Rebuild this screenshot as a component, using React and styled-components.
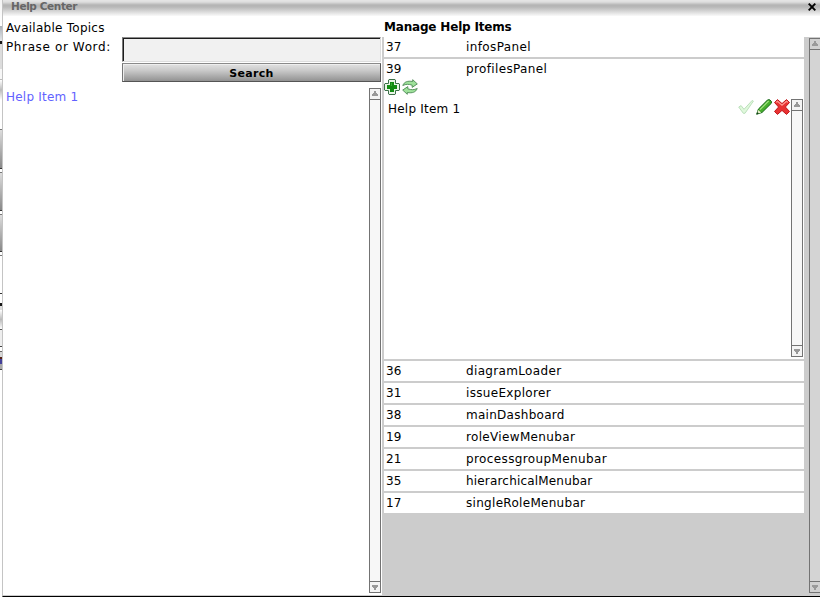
import React from "react";
import styled, { createGlobalStyle } from "styled-components";

const Global = createGlobalStyle`
  * { box-sizing: border-box; }
  body { margin: 0; overflow: hidden; background: #fff; }
  body, button, input { font-family: "DejaVu Sans", Verdana, sans-serif; font-size: 12px; color: #000; }
`;

const Screen = styled.div`
  display: flex;
  width: 820px;
  height: 597px;
  overflow: hidden;
  background: #fff;
`;

const Backdrop = styled.div`
  display: flex;
  flex-direction: column;
  flex: 0 0 2px;
  height: 597px;
`;

const Slice = styled.div`
  flex: 0 0 ${(p) => p.$h}px;
  background: ${(p) => p.$fill};
`;

const Window = styled.main`
  display: flex;
  flex-direction: column;
  width: 818px;
  height: 597px;
  border-left: 1px solid #c4c4c4;
  border-bottom: 1px solid #000;
`;

const TitleBar = styled.header`
  display: flex;
  justify-content: space-between;
  flex: 0 0 16px;
  padding: 0 4px 0 8px;
  background: linear-gradient(#e6e6e6 0, #dedede 2px, #b4b4b4 5px, #b8b8b8 7px, #d4d4d4 11px, #f2f2f2 15px, #fafafa 16px);
`;

const Title = styled.h1`
  margin: 0;
  font-size: 10.5px;
  font-weight: bold;
  line-height: 13px;
  letter-spacing: ${(p) => p.$track}px;
  color: #666;
`;

const CloseIcon = styled.svg`
  width: 8px;
  height: 8px;
  margin-top: 3px;
`;

const Body = styled.div`
  display: flex;
  flex: 0 0 579px;
`;

const BottomEdge = styled.div`
  flex: 0 0 1px;
  background: #ccc;
`;

const TopicsPanel = styled.section`
  display: flex;
  flex-direction: column;
  flex: 0 0 379px;
  height: 579px;
  padding-right: 1px;
`;

const Text = styled.span`
  display: block;
  font-size: ${(p) => p.$size || 12}px;
  font-weight: ${(p) => (p.$bold ? "bold" : "normal")};
  line-height: 18px;
  letter-spacing: ${(p) => p.$track || 0}px;
  white-space: nowrap;
  color: ${(p) => p.$color || "#000"};
`;

const TopicsTitle = styled.div`
  flex: 0 0 21px;
  padding: 3px 0 0 3px;
`;

const SearchForm = styled.form`
  display: grid;
  grid-template-columns: 119px 259px;
  grid-template-rows: 26px 19px;
  flex: 0 0 45px;
`;

const LabelCell = styled.label`
  grid-row: 1 / 3;
  padding: 1px 0 0 3px;
`;

const SearchInput = styled.input`
  width: 259px;
  height: 25px;
  padding: 0 4px;
  border: 1px solid;
  border-color: #8c8c8c #ddd #ddd #777;
  border-radius: 0;
  outline: none;
  background: #f1f1f1;
  box-shadow: inset 1px 1px #1c1c1c;
`;

const SearchButton = styled.button`
  height: 19px;
  padding: 2px 0 0;
  border: 1px solid;
  border-color: #8a8a8a #555 #555 #777;
  background: linear-gradient(#e2e2e2, #c8c8c8 40%, #929292);
  box-shadow: inset 1px 1px #eee;
  font-size: 11px;
  font-weight: bold;
  line-height: 15px;
  letter-spacing: 0.3px;
`;

const TopicsList = styled.div`
  display: flex;
  justify-content: space-between;
  flex: 0 0 505px;
  margin-top: 6px;
  padding-left: 3px;
`;

const Bar = styled.div`
  display: flex;
  flex-direction: column;
  justify-content: space-between;
  flex: 0 0 ${(p) => p.$w || 12}px;
  height: ${(p) => p.$h}px;
  border: 1px solid #737373;
  ${(p) => p.$w && "border-right: 0;"}
  background: ${(p) => (p.$dark ? "#d4d4d4" : "#f7f7f7")};
`;

const ArrowBox = styled.div`
  display: flex;
  align-items: center;
  justify-content: center;
  flex: 0 0 11px;
  border: 0 solid #737373;
  border-width: ${(p) => (p.$down ? "1px 0 0" : "0 0 1px")};
  background: ${(p) => (p.$dark ? "#d0d0d0" : "#f4f4f4")};
`;

const ManagePanel = styled.section`
  display: flex;
  flex-direction: column;
  flex: 1;
`;

const ManageTitle = styled.div`
  flex: 0 0 21px;
  padding: 2px 0 0 2px;
`;

const ManageBody = styled.div`
  display: flex;
  flex: 0 0 558px;
  justify-content: space-between;
  padding-left: 2px;
  background: #ccc;
`;

const Items = styled.div`
  display: flex;
  flex-direction: column;
  gap: 2px;
  width: 420px;
`;

const Row = styled.div`
  display: flex;
  flex: 0 0 20px;
  height: 20px;
  padding: 1px 0 0 2px;
  background: #fff;
`;

const IdCell = styled.div`
  width: 80px;
`;

const Expanded = styled.div`
  flex: 0 0 300px;
  background: #fff;
`;

const Toolbar = styled.div`
  display: flex;
  gap: 2px;
  height: 20px;
`;

const Icon = styled.svg`
  width: 16px;
  height: 16px;
`;

const HelpList = styled.div`
  display: flex;
  justify-content: space-between;
  height: 258px;
  padding: 0 1px 0 4px;
`;

const HelpRow = styled.div`
  display: flex;
  justify-content: space-between;
  flex: 1;
  padding-right: 1px;
`;

const HelpName = styled.div`
  padding-top: 1px;
`;

const Actions = styled.div`
  display: flex;
  gap: 2px;
`;

const OuterBar = styled.div`
  display: flex;
  width: 11px;
  padding-top: 1px;
`;

const slices = [
  [26, "linear-gradient(#f5f5f5, #fff)"], [15, "linear-gradient(#aab0b8, #e5e8eb)"],
  [3, "#171717"], [25, "#dcdcdc"], [10, "#f7f7f7"], [1, "#bbb"], [20, "linear-gradient(#fff, #bbb, #fff)"],
  [29, "#fff"], [1, "#777"], [38, "linear-gradient(#ddd, #888)"], [1, "#333"], [3, "#fff"],
  [1, "#777"], [37, "linear-gradient(#ddd, #888)"], [1, "#333"], [3, "#fff"],
  [1, "#777"], [36, "linear-gradient(#ddd, #888)"], [1, "#333"], [3, "#fff"], [1, "#777"],
  [37, "#fff"], [1, "#333"], [9, "#fff"], [3, "#171717"], [4, "#ddd"], [19, "linear-gradient(#fff, #bbb, #fff)"],
  [1, "#555"], [16, "#eee"], [1, "#444"], [4, "#fff"], [1, "#666"], [5, "#d8d8d8"],
  [2, "#542114"], [5, "#44409a"], [5, "#aaa"], [1, "#444"],
];

const rows = [
  ["36", "diagramLoader", 0.34], ["31", "issueExplorer", 0.32], ["38", "mainDashboard", 0.28],
  ["19", "roleViewMenubar", 0.34], ["21", "processgroupMenubar", 0.38],
  ["35", "hierarchicalMenubar", 0.18], ["17", "singleRoleMenubar", 0.3],
];

const Arrow = ({ down }) => (
  <svg width="6" height="6" viewBox="0 0 6 6" shapeRendering="crispEdges">
    <path d={down ? "M0 1h6v2H5v1H4v2H2V4H1V3H0z" : "M0 5h6V3H5V2H4V0H2v2H1v1H0z"} fill="#999" />
  </svg>
);

const ScrollBar = ({ h, w, dark }) => (
  <Bar $h={h} $w={w} $dark={dark}>
    <ArrowBox $dark={dark}><Arrow /></ArrowBox>
    <ArrowBox $down $dark={dark}><Arrow down /></ArrowBox>
  </Bar>
);

const ItemRow = ({ id, name, track }) => (
  <Row>
    <IdCell><Text $track={0.2}>{id}</Text></IdCell>
    <Text $track={track}>{name}</Text>
  </Row>
);

const AddIcon = () => (
  <Icon viewBox="0 0 16 16">
    <path d="M5 .5h6l.5.5v3.5H15l.5.5v6l-.5.5h-3.5V15l-.5.5H5l-.5-.5v-3.5H1L.5 11V5L1 4.5h3.5V1z" fill="#e9f5e7" stroke="#3d7049" />
    <path d="M6 3h4v3h3v4h-3v3H6v-3H3V6h3z" fill="#118c11" />
    <path d="M7 4h1v3H4V6.7h3z" fill="#38aa32" />
  </Icon>
);

const RefreshIcon = () => (
  <Icon viewBox="0 0 16 16">
    <g fill="#9ee19a" stroke="#4d8a55" strokeWidth=".9" strokeLinejoin="round">
      <path d="M.8 6.5C2.2 2.8 5.5 1.6 10.7 2.5V.7l4.6 4.2-5.1 3.5V6.2C6.6 5 4 5 .8 6.5z" />
      <path d="M15.2 9.5c-1.4 3.7-4.7 4.9-9.9 4v1.8L.7 11.1l5.1-3.5v2.2c3.6 1.2 6.2 1.2 9.4-.3z" />
    </g>
  </Icon>
);

const CheckIcon = () => (
  <Icon viewBox="0 0 16 16">
    <path d="M.7 8l2.4-1.4L6 10.3 14.2 1.4l1.2.7L7 14.3H5.3z" fill="#e0f8dc" stroke="#b5dcb5" strokeWidth=".9" />
  </Icon>
);

const PencilIcon = () => (
  <Icon viewBox="0 0 16 16">
    <path d="M.7 15.2l1.7-5.1L11.7.8h2.1l1.6 1.7v1.7L6 13.5z" fill="#46ad2c" stroke="#17661a" />
    <path d="M3.5 10.2l8.7-8.6 1 .7-8.8 8.8z" fill="#a2e381" />
    <path d="M1 15l1.1-4 3.1 2.5z" fill="#edf1cf" />
    <path d="M.5 15.5l.8-2.5 1.8 1.6z" fill="#123f16" />
  </Icon>
);

const DeleteIcon = () => (
  <Icon viewBox="0 0 16 16">
    <path d="M3.5.6L8 4.6l4.5-4 3 2.9L11.4 8l4.1 4.5-3 2.9-4.5-4-4.5 4-3-2.9L4.6 8 .5 3.5z" fill="#e83232" stroke="#c0181d" strokeLinejoin="round" />
    <path d="M2 3.4l1.5-1.2L8 6.3l4.5-4.1L14 3.4" fill="none" stroke="#ff9b93" strokeWidth="1.2" />
  </Icon>
);

export default function App() {
  return (
    <>
      <Global />
      <Screen>
        <Backdrop>{slices.map(([h, fill], i) => <Slice key={i} $h={h} $fill={fill} />)}</Backdrop>
        <Window>
          <TitleBar>
            <Title $track={-0.38}>Help Center</Title>
            <CloseIcon viewBox="0 0 8 8"><path d="M.7 .7l6.6 6.6M7.3 .7L.7 7.3" stroke="#000" strokeWidth="1.9" /></CloseIcon>
          </TitleBar>
          <Body>
            <TopicsPanel>
              <TopicsTitle><Text $track={0.26}>Available Topics</Text></TopicsTitle>
              <SearchForm onSubmit={(e) => e.preventDefault()}>
                <LabelCell htmlFor="phrase"><Text $track={0.62}>Phrase or Word:</Text></LabelCell>
                <SearchInput id="phrase" />
                <SearchButton>Search</SearchButton>
              </SearchForm>
              <TopicsList>
                <Text $track={0.22} $color="#6262ff">Help Item 1</Text>
                <ScrollBar h={505} />
              </TopicsList>
            </TopicsPanel>
            <ManagePanel>
              <ManageTitle><Text $bold $track={-0.18}>Manage Help Items</Text></ManageTitle>
              <ManageBody>
                <Items>
                  <ItemRow id="37" name="infosPanel" track={0.38} />
                  <Expanded>
                    <ItemRow id="39" name="profilesPanel" track={0.36} />
                    <Toolbar><AddIcon /><RefreshIcon /></Toolbar>
                    <HelpList>
                      <HelpRow>
                        <HelpName><Text $track={0.22}>Help Item 1</Text></HelpName>
                        <Actions><CheckIcon /><PencilIcon /><DeleteIcon /></Actions>
                      </HelpRow>
                      <ScrollBar h={258} />
                    </HelpList>
                  </Expanded>
                  {rows.map(([id, name, track]) => <ItemRow key={id} id={id} name={name} track={track} />)}
                </Items>
                <OuterBar><ScrollBar h={555} w={11} dark /></OuterBar>
              </ManageBody>
            </ManagePanel>
          </Body>
          <BottomEdge />
        </Window>
      </Screen>
    </>
  );
}
